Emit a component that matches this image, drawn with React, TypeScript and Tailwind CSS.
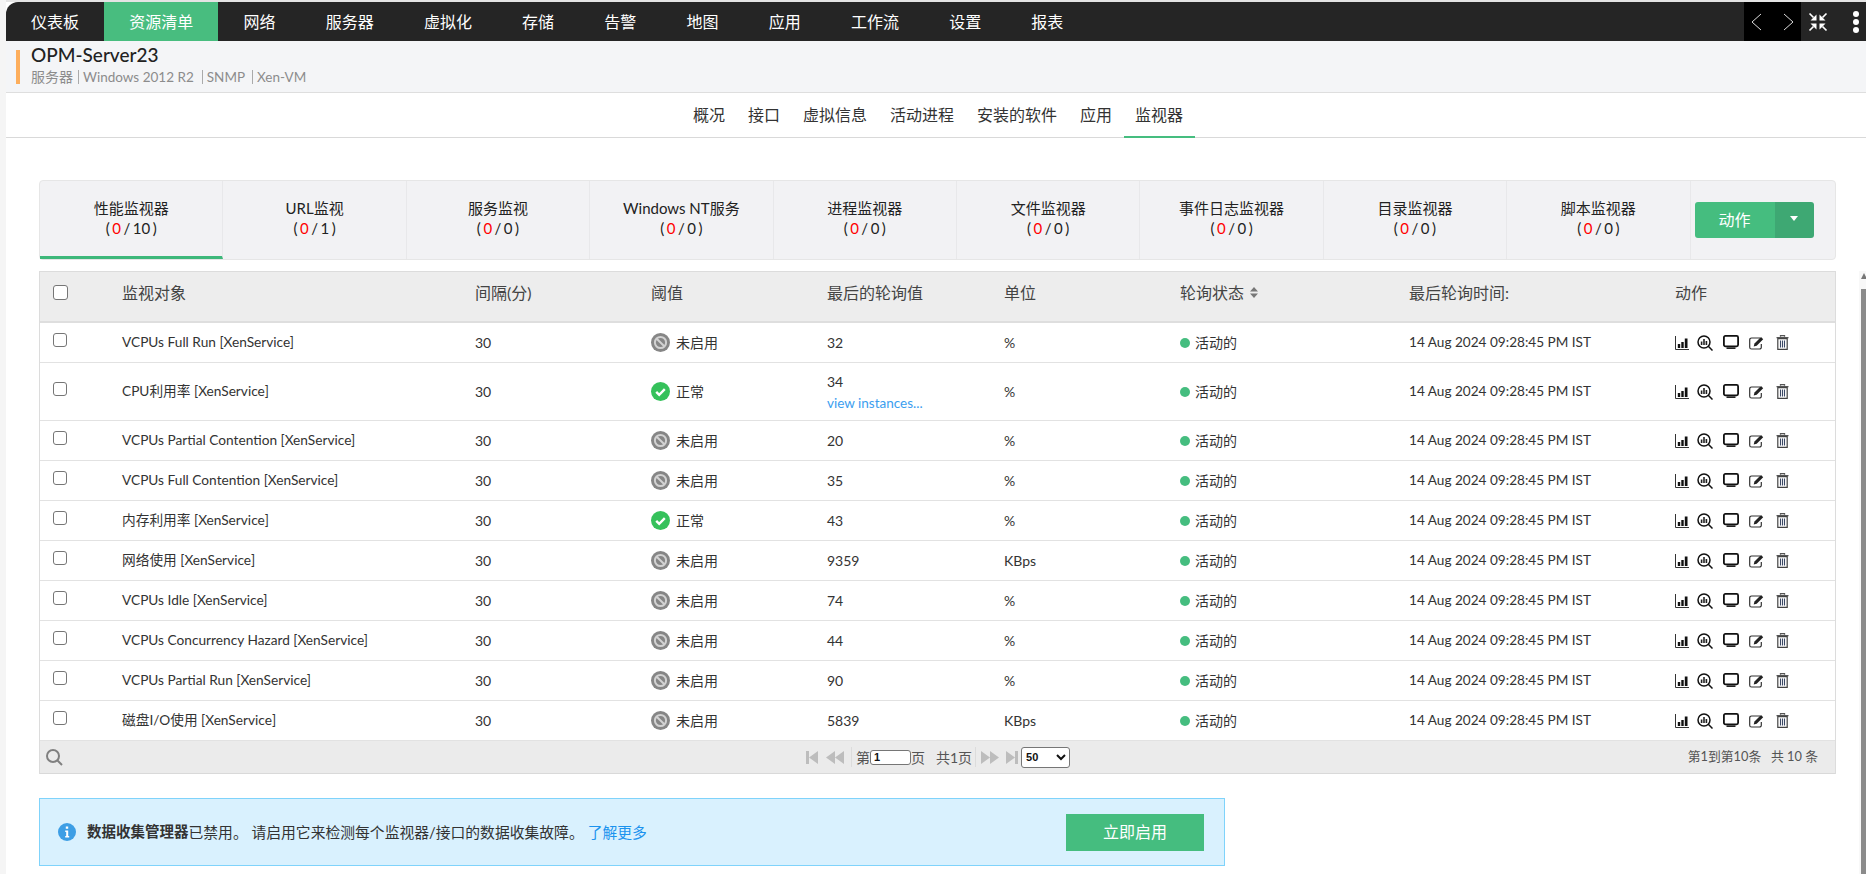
const navItems = ['仪表板', '资源清单', '网络', '服务器', '虚拟化', '存储', '告警', '地图', '应用', '工作流', '设置', '报表']
const subTabs = ['概况', '接口', '虚拟信息', '活动进程', '安装的软件', '应用', '监视器']
const monitorTabs = [
  { name: '性能监视器', total: 10 },
  { name: 'URL监视', total: 1 },
  { name: '服务监视', total: 0 },
  { name: 'Windows NT服务', total: 0 },
  { name: '进程监视器', total: 0 },
  { name: '文件监视器', total: 0 },
  { name: '事件日志监视器', total: 0 },
  { name: '目录监视器', total: 0 },
  { name: '脚本监视器', total: 0 },
]
const rows = [
  { name: 'VCPUs Full Run [XenService]', ok: false, value: '32', unit: '%' },
  { name: 'CPU利用率 [XenService]', ok: true, value: '34', unit: '%', instances: true },
  { name: 'VCPUs Partial Contention [XenService]', ok: false, value: '20', unit: '%' },
  { name: 'VCPUs Full Contention [XenService]', ok: false, value: '35', unit: '%' },
  { name: '内存利用率 [XenService]', ok: true, value: '43', unit: '%' },
  { name: '网络使用 [XenService]', ok: false, value: '9359', unit: 'KBps' },
  { name: 'VCPUs Idle [XenService]', ok: false, value: '74', unit: '%' },
  { name: 'VCPUs Concurrency Hazard [XenService]', ok: false, value: '44', unit: '%' },
  { name: 'VCPUs Partial Run [XenService]', ok: false, value: '90', unit: '%' },
  { name: '磁盘I/O使用 [XenService]', ok: false, value: '5839', unit: 'KBps' },
]

const columns = 'grid grid-cols-[82px_353px_176px_176px_177px_176px_229px_266px_1fr]'

function Checkbox({ className }: { className: string }) {
  return <input type="checkbox" className={`appearance-none bg-white border border-[#767676] rounded-[3px] ml-[13px] ${className}`} />
}

function BanIcon() {
  return (
    <svg width="19" height="19" viewBox="0 0 19 19" className="shrink-0">
      <circle cx="9.5" cy="9.5" r="9.5" fill="#868686" />
      <circle cx="9.5" cy="9.5" r="5.6" fill="none" stroke="#d2d2d2" strokeWidth="2" />
      <path d="M5.7 5.7l7.6 7.6" stroke="#d2d2d2" strokeWidth="2" />
    </svg>
  )
}

function OkIcon() {
  return (
    <svg width="19" height="19" viewBox="0 0 19 19" className="shrink-0">
      <circle cx="9.5" cy="9.5" r="9.5" fill="#35c15b" />
      <path d="M5.2 9.8l3 3 5.6-5.6" fill="none" stroke="#fff" strokeWidth="2.4" />
    </svg>
  )
}

function ActionIcons() {
  return (
    <div className="flex items-center h-[16px]">
      <svg width="14" height="14" viewBox="0 0 14 14" className="mr-[8px]">
        <path d="M.5 0v13.5H14" fill="none" stroke="#333" />
        <path d="M2.800 8h2.400v4H2.800zM6.300 6h2.400v6H6.300zM9.800 2.500h2.700V12H9.800z" fill="#111" />
      </svg>
      <svg width="16" height="16" viewBox="0 0 16 16" className="mr-[10px]">
        <circle cx="7" cy="7" r="6" fill="none" stroke="#111" strokeWidth="1.500" />
        <path d="M11.300 11.300l4.200 4.200" stroke="#111" strokeWidth="1.500" />
        <path d="M3.800 6.500h1.600V10H3.800zM6.200 4h1.600v6H6.200zM8.600 6h1.600v4H8.600z" fill="#222" />
      </svg>
      <svg width="16" height="15" viewBox="0 0 16 15" className="mr-[10px]">
        <rect x=".9" y=".9" width="14.200" height="10.400" rx="1.500" fill="none" stroke="#111" strokeWidth="1.800" />
        <path d="M3.500 12.300h9V14h-9z" fill="#222" />
      </svg>
      <svg width="16" height="14" viewBox="0 0 16 14" className="mr-[11px]">
        <path d="M11 2H2.500A1.800 1.800 0 0 0 .7 3.800v7.400A1.800 1.800 0 0 0 2.500 13h8a1.800 1.800 0 0 0 1.800-1.800V8" fill="none" stroke="#333" strokeWidth="1.200" />
        <path d="M5.500 7.500L12 1l2.200 2.200-6.500 6.500-3 .8z" fill="#222" />
      </svg>
      <svg width="13" height="15" viewBox="0 0 13 15">
        <path d="M4.500 1.700V.7h4v1M.5 2.700h12" fill="none" stroke="#555" strokeWidth="1.300" />
        <path d="M1.800 3.700h9.400V14.400H1.800z" fill="none" stroke="#444" strokeWidth="1.200" />
        <path d="M4.500 5.500v7M6.500 5.500v7M8.500 5.500v7" stroke="#3c4a66" strokeWidth="1.100" />
      </svg>
    </div>
  )
}

function PagerArrow({ flip, bar }: { flip?: boolean; bar?: boolean }) {
  return (
    <svg width={bar ? 12 : 18} height="13" viewBox={bar ? '0 0 12 13' : '0 0 18 13'} className={flip ? '-scale-x-100' : ''}>
      {bar ? <path d="M0 0h3v13H0zM12 0v13L3 6.500z" fill="#bdbdbd" /> : <path d="M9 0v13L0 6.500zM18 0v13L9 6.500z" fill="#bdbdbd" />}
    </svg>
  )
}

export default function App() {
  return (
    <div className="relative h-[874px] overflow-hidden bg-white pl-[6px] text-[#333] font-['Lato','Noto_Sans_CJK_SC',sans-serif]">
      <div className="absolute left-0 top-0 bottom-0 w-[6px] bg-[#f5f5f5]" />

      <div className="h-[2px] bg-[#e4e4e4]" />
      <div className="flex items-stretch h-[39px] bg-[#252525] text-white text-[16px] rounded-tl-xl overflow-hidden">
        {navItems.map((item, i) => (
          <div key={item} className={`flex items-center px-[25.100px] ${i === 1 ? 'bg-[#48bd7f]' : ''}`}>
            {item}
          </div>
        ))}
        <div className="ml-auto flex">
          <div className="flex items-center justify-between w-[57px] bg-black px-[5px]">
            <svg width="16" height="20" viewBox="0 0 16 20"><path d="M12 2L3 10l9 8" fill="none" stroke="#ddd" strokeWidth="1" /></svg>
            <svg width="16" height="20" viewBox="0 0 16 20"><path d="M4 2l9 8-9 8" fill="none" stroke="#ddd" strokeWidth="1" /></svg>
          </div>
          <div className="flex items-center w-[65px] pl-[7px] pr-[7px] justify-between">
            <svg width="20" height="20" viewBox="0 0 20 20">
              <path d="M1.500 1.500l4 4M18.500 1.500l-4 4M1.500 18.500l4-4M18.500 18.500l-4-4" stroke="#fff" strokeWidth="1.700" />
              <path d="M8.500 8.500h-6l6-6zM11.500 8.500h6l-6-6zM8.500 11.500h-6l6 6zM11.500 11.500h6l-6 6z" fill="#fff" />
            </svg>
            <div className="flex flex-col gap-[2px]">
              <div className="w-[6px] h-[6px] rounded-full bg-white" />
              <div className="w-[6px] h-[6px] rounded-full bg-white" />
              <div className="w-[6px] h-[6px] rounded-full bg-white" />
            </div>
          </div>
        </div>
      </div>

      <div className="flex items-center h-[52px] bg-[#f4f5f7] border-b border-[#dedede] pl-[10px]">
        <div className="w-[4px] h-[34px] bg-[#fdae5c] mr-[11px]" />
        <div className="self-start pt-[2px]">
          <div className="text-[19px] leading-[24px] font-medium text-[#222]">OPM-Server23</div>
          <div className="flex items-center mt-[1px] text-[13.500px] leading-[18px] text-[#8c8c8c]">
            <span className="text-[14px]">服务器</span>
            <span className="w-px h-[14px] bg-[#aaa] ml-[5px] mr-[4px]" />
            <span>Windows 2012 R2</span>
            <span className="w-px h-[14px] bg-[#aaa] ml-[8px] mr-[4px]" />
            <span>SNMP</span>
            <span className="w-px h-[14px] bg-[#aaa] ml-[7px] mr-[4px]" />
            <span>Xen-VM</span>
          </div>
        </div>
      </div>

      <div className="flex justify-center h-[45px] border-b border-[#d9d9d9] text-[16px] pl-[4px]">
        {subTabs.map((tab, i) => (
          <div key={tab} className={`flex items-center px-[11.500px] ${i === 6 ? 'border-b-[2px] border-[#45bd7f] h-[45px]' : 'h-[44px]'}`}>
            {tab}
          </div>
        ))}
      </div>

      <div className="pl-[33px] w-[1830px]">
        <div className="flex h-[80px] mt-[42px] bg-[#f2f2f4] border border-[#e6e6e6] rounded-[4px]">
          {monitorTabs.map((tab, i) => (
            <div
              key={tab.name}
              className={`w-[183.400px] shrink-0 flex flex-col items-center pt-[17px] text-[15px] leading-[20px] text-[#222] border-r border-[#e8e8ea] ${i === 0 ? 'border-b-[3px] border-b-[#3eb87a]' : ''}`}
            >
              <div>{tab.name}</div>
              <div className="flex gap-[2.500px]">
                <span>(</span>
                <span className="text-[#f00]">0</span>
                <span>/</span>
                <span>{tab.total}</span>
                <span>)</span>
              </div>
            </div>
          ))}
          <div className="flex items-center pl-[4px]">
            <div className="flex w-[119px] h-[36px] rounded-[3px] overflow-hidden text-white text-[16px]">
              <div className="flex items-center justify-center w-[80px] bg-[#45bd7f]">动作</div>
              <div className="flex items-center justify-center flex-1 bg-[#3ea873] pb-[4px]">
                <div className="w-0 h-0 border-l-[4px] border-r-[4px] border-t-[5px] border-l-transparent border-r-transparent border-t-white" />
              </div>
            </div>
          </div>
        </div>

        <div className="mt-[11px] border border-[#dcdcdc] border-b-0">
          <div className={`${columns} h-[51px] items-center bg-[#ededed] border-b-2 border-[#dedede] text-[16px] text-[#444] pb-[8px]`}>
            <div className="flex"><Checkbox className="w-[15px] h-[15px]" /></div>
            <div>监视对象</div>
            <div>间隔(分)</div>
            <div>阈值</div>
            <div>最后的轮询值</div>
            <div>单位</div>
            <div className="flex items-center gap-[6px]">
              轮询状态
              <svg width="8" height="11" viewBox="0 0 8 11"><path d="M4 0l4 4.500H0zM4 11L0 6.500h8z" fill="#777" /></svg>
            </div>
            <div>最后轮询时间:</div>
            <div>动作</div>
          </div>
          {rows.map(row => (
            <div key={row.name} className={`${columns} ${row.instances ? 'h-[58px]' : 'h-[40px]'} items-center border-b border-[#e2e2e2] text-[14px] text-[#333]`}>
              <div className="flex"><Checkbox className="w-[14px] h-[14px] -mt-[5px]" /></div>
              <div className="text-[13.700px]">{row.name}</div>
              <div>30</div>
              <div className="flex items-center gap-[6px]">
                {row.ok ? <OkIcon /> : <BanIcon />}
                <span>{row.ok ? '正常' : '未启用'}</span>
              </div>
              <div>
                <div className="leading-[22px]">{row.value}</div>
                {row.instances && <div className="text-[13.500px] leading-[20px] text-[#3b9eef]">view instances...</div>}
              </div>
              <div>{row.unit}</div>
              <div className="flex items-center gap-[5px]">
                <div className="w-[10px] h-[10px] rounded-full bg-[#45bd7f]" />
                活动的
              </div>
              <div className="text-[13.600px]">14 Aug 2024 09:28:45 PM IST</div>
              <ActionIcons />
            </div>
          ))}
          <div className="relative flex items-center justify-center h-[33px] bg-[#ebebeb] border-b border-[#d9d9d9] text-[14px] text-[#555]">
            <svg width="17" height="17" viewBox="0 0 17 17" className="absolute left-[6px]">
              <circle cx="7" cy="7" r="6" fill="none" stroke="#808080" strokeWidth="2" />
              <path d="M11.500 11.500l4.500 4.500" stroke="#808080" strokeWidth="2" />
            </svg>
            <div className="flex items-center ml-[1px]">
              <PagerArrow bar />
              <div className="w-[8px]" />
              <PagerArrow />
              <div className="w-px h-[20px] bg-[#dcdcdc] ml-[7px] mr-[4px]" />
              <span>第</span>
              <input defaultValue="1" className="w-[41px] h-[15px] bg-white border border-[#767676] rounded-[3px] text-[11px] font-bold text-[#111] pl-[3px] font-['Liberation_Sans',sans-serif]" />
              <span>页</span>
              <span className="ml-[11px]">共1页</span>
              <div className="w-px h-[20px] bg-[#dcdcdc] ml-[3px] mr-[5px]" />
              <PagerArrow flip />
              <div className="w-[7px]" />
              <PagerArrow bar flip />
              <select className="ml-[3px] w-[49px] h-[21px] bg-white border border-[#767676] rounded-[3px] text-[11px] font-bold text-[#111] font-['Liberation_Sans',sans-serif]">
                <option>50</option>
              </select>
            </div>
            <div className="absolute right-[17px] text-[12.800px]">第1到第10条&nbsp;&nbsp;&nbsp;共 10 条</div>
          </div>
        </div>

        <div className="flex items-center w-[1186px] h-[68px] mt-[24px] bg-[#d9f1fe] border border-[#7fd3fb] pl-[18px] text-[14.800px] text-[#333]">
          <svg width="18" height="18" viewBox="0 0 18 18" className="shrink-0 mr-[11px]">
            <circle cx="9" cy="9" r="9" fill="#3d9ee5" />
            <path d="M7.800 3.500h2.400v2.300H7.800zM7.200 7.500h3v5.500h1v1.400H7.200V13h1v-4h-1z" fill="#fff" />
          </svg>
          <b className="text-[14.500px]">数据收集管理器</b>
          <span>已禁用。 请启用它来检测每个监视器/接口的数据收集故障。</span>
          <span className="ml-[4px] text-[#1c93ee]">了解更多</span>
          <button className="ml-auto mr-[20px] w-[138px] h-[37px] bg-[#45bd7f] text-white text-[16px]">立即启用</button>
        </div>
      </div>

      <div className="absolute right-0 top-[271px] bottom-0 w-[7px] bg-[#f8f8f8]">
        <div className="ml-[2px] w-0 h-0 border-l-[3px] border-r-[3px] border-b-[6px] border-l-transparent border-r-transparent border-b-[#777] mt-[2px]" />
        <div className="absolute top-[18px] bottom-0 left-[2px] right-0 bg-[#8b8b8b]" />
      </div>
    </div>
  )
}
